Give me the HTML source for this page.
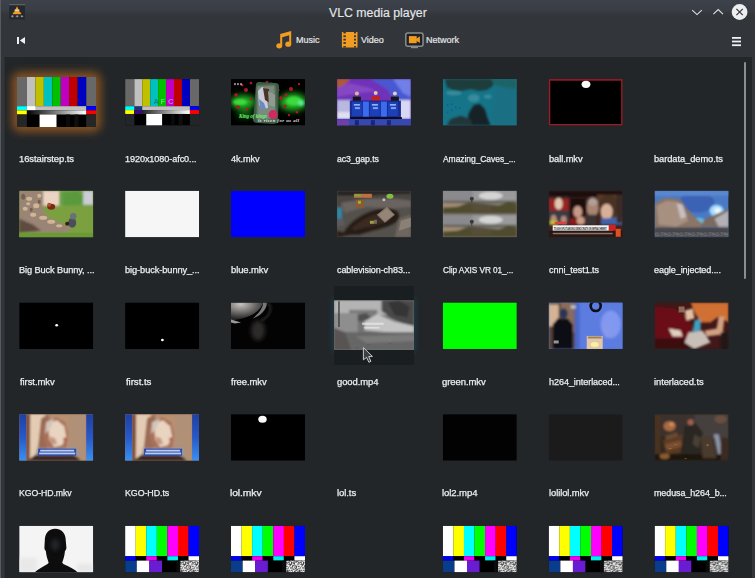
<!DOCTYPE html>
<html><head><meta charset="utf-8">
<style>
*{margin:0;padding:0;box-sizing:border-box}
html,body{width:755px;height:578px;overflow:hidden;background:#32363a;font-family:"Liberation Sans",sans-serif}
#win{position:absolute;left:0;top:0;width:755px;height:578px;background:#32363a}
#title{position:absolute;left:0;top:0;width:755px;height:20px;background:linear-gradient(#3d414a 0px,#3a3e46 9px,#373b42 11.5px,#33373c 14px,#32363a 20px)}
#lb{position:absolute;left:0;top:0;width:1px;height:578px;background:#575b5f}
#content{position:absolute;left:4px;top:57px;width:748px;height:521px;background:#232629;border-left:1px solid #2b2f32}
.l{position:absolute;transform-origin:0 0;font-size:9px;color:#eceeef;white-space:nowrap;line-height:10px;-webkit-text-stroke:0.25px #eceeef;letter-spacing:-0.08px}
.ttl{position:absolute;left:329px;top:6px;font-size:12.3px;line-height:15px;color:#e4e6e8;white-space:nowrap;-webkit-text-stroke:0.15px #e4e6e8}
.tb{position:absolute;font-size:9px;line-height:10px;color:#e4e6e8;white-space:nowrap;-webkit-text-stroke:0.2px #e4e6e8}
#sb{position:absolute;left:744px;top:62px;width:2px;height:217px;background:#8a8e91;border-radius:1px}
</style></head><body>
<div id="win">
<div id="title"></div>
<div id="lb"></div>
<div class="ttl">VLC media player</div>
<div class="tb" style="left:296px;top:35px">Music</div>
<div class="tb" style="left:361px;top:35px">Video</div>
<div class="tb" style="left:426px;top:35px">Network</div>

<svg width="755" height="57" style="position:absolute;left:0;top:0">
<!-- vlc app icon -->
<rect x="9.2" y="4" width="15.8" height="15.5" fill="#25282c"/>
<rect x="9.2" y="4" width="15.8" height="1.3" fill="#5e6164"/>
<path d="M17,6.3 L20.6,13.8 L13.4,13.8 Z" fill="#f0a030"/>
<rect x="14.6" y="9.6" width="4.8" height="1.3" fill="#e0d8c8"/>
<rect x="12.8" y="12.6" width="8.4" height="1.6" fill="#f59a20"/>
<g fill="#9a9da0" stroke="#1a1c1e" stroke-width="0.6"><circle cx="12.4" cy="16.3" r="1.4"/><circle cx="17.2" cy="16.3" r="1.4"/><circle cx="21.9" cy="16.3" r="1.4"/></g>
<!-- back -->
<rect x="17" y="37" width="2" height="7" fill="#eef0f1"/>
<path d="M25,37 L25,44 L19.8,40.5 Z" fill="#eef0f1"/>
<!-- music note -->
<g fill="#f39c22">
<path d="M280.2,34 L291.2,31 L291.2,44.8 L289.2,44.8 L289.2,35.2 L282.2,37.2 L282.2,46.5 L280.2,46.5 Z"/>
<ellipse cx="279.2" cy="45.8" rx="2.9" ry="2.6"/>
<ellipse cx="288.2" cy="44.2" rx="2.9" ry="2.6"/>
</g>
<!-- film strip -->
<rect x="341.9" y="32" width="15.6" height="15.5" fill="#f39c22"/>
<g fill="#32363a">
<rect x="343.4" y="32" width="2.5" height="1.4"/><rect x="354" y="32" width="2" height="1.4"/>
<rect x="343.4" y="46.1" width="2.5" height="1.4"/><rect x="354" y="46.1" width="2" height="1.4"/>
<rect x="343.4" y="35.3" width="2.4" height="1.8"/><rect x="343.4" y="38.7" width="2.4" height="1.8"/><rect x="343.4" y="42.1" width="2.4" height="1.8"/>
<rect x="354" y="35.3" width="1.9" height="1.8"/><rect x="354" y="38.7" width="1.9" height="1.8"/><rect x="354" y="42.1" width="1.9" height="1.8"/>
</g>
<!-- network tv -->
<rect x="405.8" y="33" width="17.2" height="13.2" rx="2" fill="#1e2226" stroke="#8a8d90" stroke-width="1.5"/>
<rect x="411" y="46.8" width="7" height="1.4" fill="#8a8d90"/>
<rect x="408.9" y="36.1" width="7.8" height="7.1" fill="#f39c22"/>
<path d="M416,39 L419.9,36.2 L419.9,43 L416,40.4 Z" fill="#f39c22"/>
<!-- window controls -->
<path d="M692.2,10.2 L697,14.6 L701.8,10.2" fill="none" stroke="#dfe1e3" stroke-width="1.1"/>
<path d="M713.4,14.2 L718.2,9.6 L723,14.2" fill="none" stroke="#dfe1e3" stroke-width="1.1"/>
<circle cx="739.6" cy="12" r="7.9" fill="#eceeef"/>
<path d="M736.4,8.8 L742.8,15.2 M742.8,8.8 L736.4,15.2" stroke="#32363a" stroke-width="1.2"/>
<!-- hamburger -->
<g fill="#eef0f1"><rect x="732" y="37" width="9" height="1.8"/><rect x="732" y="40.6" width="9" height="1.8"/><rect x="732" y="44.3" width="9" height="1.8"/></g>
</svg>
<div id="content"></div>
<div id="sb"></div>
</div>
<svg id="thumbs" width="755" height="578" viewBox="0 0 755 578" style="position:absolute;left:0;top:0">
<defs><pattern id="noise" width="12" height="12" patternUnits="userSpaceOnUse"><rect width="12" height="12" fill="#8a8a8a"/><rect x="0" y="0" width="1" height="1" fill="#4a4a4a"/><rect x="6" y="0" width="1" height="1" fill="#eeeeee"/><rect x="7" y="0" width="1" height="1" fill="#4a4a4a"/><rect x="9" y="0" width="1" height="1" fill="#4a4a4a"/><rect x="11" y="0" width="1" height="1" fill="#eeeeee"/><rect x="0" y="1" width="1" height="1" fill="#4a4a4a"/><rect x="1" y="1" width="1" height="1" fill="#c4c4c4"/><rect x="2" y="1" width="1" height="1" fill="#4a4a4a"/><rect x="3" y="1" width="1" height="1" fill="#4a4a4a"/><rect x="4" y="1" width="1" height="1" fill="#eeeeee"/><rect x="5" y="1" width="1" height="1" fill="#eeeeee"/><rect x="6" y="1" width="1" height="1" fill="#c4c4c4"/><rect x="9" y="1" width="1" height="1" fill="#eeeeee"/><rect x="11" y="1" width="1" height="1" fill="#eeeeee"/><rect x="0" y="2" width="1" height="1" fill="#4a4a4a"/><rect x="1" y="2" width="1" height="1" fill="#eeeeee"/><rect x="2" y="2" width="1" height="1" fill="#eeeeee"/><rect x="4" y="2" width="1" height="1" fill="#eeeeee"/><rect x="5" y="2" width="1" height="1" fill="#eeeeee"/><rect x="8" y="2" width="1" height="1" fill="#c4c4c4"/><rect x="10" y="2" width="1" height="1" fill="#4a4a4a"/><rect x="11" y="2" width="1" height="1" fill="#4a4a4a"/><rect x="0" y="3" width="1" height="1" fill="#eeeeee"/><rect x="2" y="3" width="1" height="1" fill="#4a4a4a"/><rect x="5" y="3" width="1" height="1" fill="#c4c4c4"/><rect x="6" y="3" width="1" height="1" fill="#c4c4c4"/><rect x="7" y="3" width="1" height="1" fill="#eeeeee"/><rect x="8" y="3" width="1" height="1" fill="#eeeeee"/><rect x="9" y="3" width="1" height="1" fill="#eeeeee"/><rect x="10" y="3" width="1" height="1" fill="#c4c4c4"/><rect x="11" y="3" width="1" height="1" fill="#4a4a4a"/><rect x="0" y="4" width="1" height="1" fill="#eeeeee"/><rect x="1" y="4" width="1" height="1" fill="#4a4a4a"/><rect x="2" y="4" width="1" height="1" fill="#c4c4c4"/><rect x="3" y="4" width="1" height="1" fill="#c4c4c4"/><rect x="5" y="4" width="1" height="1" fill="#4a4a4a"/><rect x="6" y="4" width="1" height="1" fill="#c4c4c4"/><rect x="7" y="4" width="1" height="1" fill="#4a4a4a"/><rect x="9" y="4" width="1" height="1" fill="#eeeeee"/><rect x="11" y="4" width="1" height="1" fill="#eeeeee"/><rect x="2" y="5" width="1" height="1" fill="#eeeeee"/><rect x="4" y="5" width="1" height="1" fill="#c4c4c4"/><rect x="5" y="5" width="1" height="1" fill="#4a4a4a"/><rect x="6" y="5" width="1" height="1" fill="#eeeeee"/><rect x="7" y="5" width="1" height="1" fill="#eeeeee"/><rect x="8" y="5" width="1" height="1" fill="#eeeeee"/><rect x="10" y="5" width="1" height="1" fill="#eeeeee"/><rect x="2" y="6" width="1" height="1" fill="#c4c4c4"/><rect x="3" y="6" width="1" height="1" fill="#c4c4c4"/><rect x="4" y="6" width="1" height="1" fill="#4a4a4a"/><rect x="6" y="6" width="1" height="1" fill="#eeeeee"/><rect x="10" y="6" width="1" height="1" fill="#eeeeee"/><rect x="0" y="7" width="1" height="1" fill="#eeeeee"/><rect x="1" y="7" width="1" height="1" fill="#c4c4c4"/><rect x="2" y="7" width="1" height="1" fill="#4a4a4a"/><rect x="4" y="7" width="1" height="1" fill="#c4c4c4"/><rect x="6" y="7" width="1" height="1" fill="#4a4a4a"/><rect x="7" y="7" width="1" height="1" fill="#c4c4c4"/><rect x="8" y="7" width="1" height="1" fill="#c4c4c4"/><rect x="9" y="7" width="1" height="1" fill="#eeeeee"/><rect x="10" y="7" width="1" height="1" fill="#eeeeee"/><rect x="11" y="7" width="1" height="1" fill="#eeeeee"/><rect x="0" y="8" width="1" height="1" fill="#4a4a4a"/><rect x="2" y="8" width="1" height="1" fill="#eeeeee"/><rect x="3" y="8" width="1" height="1" fill="#eeeeee"/><rect x="5" y="8" width="1" height="1" fill="#4a4a4a"/><rect x="6" y="8" width="1" height="1" fill="#c4c4c4"/><rect x="7" y="8" width="1" height="1" fill="#c4c4c4"/><rect x="8" y="8" width="1" height="1" fill="#4a4a4a"/><rect x="10" y="8" width="1" height="1" fill="#4a4a4a"/><rect x="11" y="8" width="1" height="1" fill="#c4c4c4"/><rect x="0" y="9" width="1" height="1" fill="#eeeeee"/><rect x="2" y="9" width="1" height="1" fill="#eeeeee"/><rect x="3" y="9" width="1" height="1" fill="#4a4a4a"/><rect x="5" y="9" width="1" height="1" fill="#eeeeee"/><rect x="8" y="9" width="1" height="1" fill="#4a4a4a"/><rect x="10" y="9" width="1" height="1" fill="#eeeeee"/><rect x="11" y="9" width="1" height="1" fill="#c4c4c4"/><rect x="0" y="10" width="1" height="1" fill="#eeeeee"/><rect x="2" y="10" width="1" height="1" fill="#c4c4c4"/><rect x="3" y="10" width="1" height="1" fill="#4a4a4a"/><rect x="7" y="10" width="1" height="1" fill="#4a4a4a"/><rect x="8" y="10" width="1" height="1" fill="#4a4a4a"/><rect x="10" y="10" width="1" height="1" fill="#4a4a4a"/><rect x="11" y="10" width="1" height="1" fill="#c4c4c4"/><rect x="0" y="11" width="1" height="1" fill="#c4c4c4"/><rect x="1" y="11" width="1" height="1" fill="#eeeeee"/><rect x="2" y="11" width="1" height="1" fill="#c4c4c4"/><rect x="5" y="11" width="1" height="1" fill="#4a4a4a"/><rect x="6" y="11" width="1" height="1" fill="#4a4a4a"/><rect x="7" y="11" width="1" height="1" fill="#c4c4c4"/><rect x="8" y="11" width="1" height="1" fill="#eeeeee"/><rect x="9" y="11" width="1" height="1" fill="#c4c4c4"/></pattern></defs>
<defs>
<filter id="b05" x="-20%" y="-20%" width="140%" height="140%"><feGaussianBlur stdDeviation="0.5"/></filter>
<filter id="b1" x="-30%" y="-30%" width="160%" height="160%"><feGaussianBlur stdDeviation="1"/></filter>
<filter id="b2" x="-50%" y="-50%" width="200%" height="200%"><feGaussianBlur stdDeviation="2"/></filter>
<filter id="b3" x="-50%" y="-50%" width="200%" height="200%"><feGaussianBlur stdDeviation="3"/></filter>
</defs>

<clipPath id="tc"><rect width="74" height="46.5"/></clipPath>
<filter id="gl" x="-50%" y="-50%" width="200%" height="200%"><feGaussianBlur stdDeviation="4.2"/></filter>
<rect x="12" y="72" width="89" height="60" rx="8" fill="#8e5620" opacity="0.9" filter="url(#gl)"/>

<g transform="translate(17,77) scale(1.0676,1.0753)" clip-path="url(#tc)"><rect width="74" height="46.5" fill="#000"/><rect x="0" y="0" width="9.25" height="27.125" fill="#686868"/><rect x="64.75" y="0" width="9.25" height="27.125" fill="#686868"/><rect x="9.250" y="0" width="7.979" height="27.125" fill="#c0c0c0"/><rect x="17.179" y="0" width="7.979" height="27.125" fill="#c0c000"/><rect x="25.107" y="0" width="7.979" height="27.125" fill="#00c0c0"/><rect x="33.036" y="0" width="7.979" height="27.125" fill="#00c000"/><rect x="40.964" y="0" width="7.979" height="27.125" fill="#c000c0"/><rect x="48.893" y="0" width="7.979" height="27.125" fill="#c00000"/><rect x="56.821" y="0" width="7.979" height="27.125" fill="#0000c0"/><rect x="0" y="27.125" width="9.25" height="3.875" fill="#00ffff"/><rect x="64.75" y="27.125" width="9.25" height="3.875" fill="#0000ff"/><rect x="9.25" y="27.125" width="55.5" height="3.875" fill="#c0c0c0"/><rect x="9.25" y="27.125" width="7.928571428571429" height="3.875" fill="#ffffff"/><rect x="0" y="31.0" width="9.25" height="3.875" fill="#ffff00"/><rect x="64.75" y="31.0" width="9.25" height="3.875" fill="#ff0000"/><linearGradient id="ramp1" x1="0" x2="1"><stop offset="0" stop-color="#000"/><stop offset="1" stop-color="#fff"/></linearGradient><rect x="9.25" y="31.0" width="55.5" height="3.875" fill="url(#ramp1)"/><rect x="0" y="34.875" width="9.25" height="12.625" fill="#262626"/><rect x="64.75" y="34.875" width="9.25" height="12.625" fill="#262626"/><rect x="21.143" y="34.875" width="15.857" height="11.625" fill="#ffffff"/><rect x="45.721" y="34.875" width="3.964" height="11.625" fill="#0a0a0a"/><rect x="53.650" y="34.875" width="3.964" height="11.625" fill="#0e0e0e"/></g>
<g transform="translate(125.10,79.10)" clip-path="url(#tc)"><rect width="74" height="46.5" fill="#000"/><rect x="0" y="0" width="9.25" height="27.125" fill="#686868"/><rect x="64.75" y="0" width="9.25" height="27.125" fill="#686868"/><rect x="9.250" y="0" width="7.979" height="27.125" fill="#c0c0c0"/><rect x="17.179" y="0" width="7.979" height="27.125" fill="#c0c000"/><rect x="25.107" y="0" width="7.979" height="27.125" fill="#00c0c0"/><rect x="33.036" y="0" width="7.979" height="27.125" fill="#00c000"/><rect x="40.964" y="0" width="7.979" height="27.125" fill="#c000c0"/><rect x="48.893" y="0" width="7.979" height="27.125" fill="#c00000"/><rect x="56.821" y="0" width="7.979" height="27.125" fill="#0000c0"/><rect x="0" y="27.125" width="9.25" height="3.875" fill="#00ffff"/><rect x="64.75" y="27.125" width="9.25" height="3.875" fill="#0000ff"/><rect x="9.25" y="27.125" width="55.5" height="3.875" fill="#c0c0c0"/><rect x="9.25" y="27.125" width="7.928571428571429" height="3.875" fill="#1c3572"/><rect x="0" y="31.0" width="9.25" height="3.875" fill="#ffff00"/><rect x="64.75" y="31.0" width="9.25" height="3.875" fill="#ff0000"/><linearGradient id="ramp2" x1="0" x2="1"><stop offset="0" stop-color="#000"/><stop offset="1" stop-color="#fff"/></linearGradient><rect x="9.25" y="31.0" width="55.5" height="3.875" fill="url(#ramp2)"/><rect x="9.25" y="31.0" width="7.928571428571429" height="3.875" fill="#3a0a78"/><rect x="0" y="34.875" width="9.25" height="12.625" fill="#232629"/><rect x="64.75" y="34.875" width="9.25" height="12.625" fill="#232629"/><rect x="21.143" y="34.875" width="15.857" height="11.625" fill="#ffffff"/><rect x="45.721" y="34.875" width="3.964" height="11.625" fill="#0a0a0a"/><rect x="53.650" y="34.875" width="3.964" height="11.625" fill="#0e0e0e"/><text x="28.5" y="24.5" font-family="Liberation Sans" font-weight="bold" font-size="7.5" fill="#207878" opacity="0.85" textLength="8">A</text><text x="35.5" y="24.5" font-family="Liberation Sans" font-weight="bold" font-size="7.5" fill="#a0f0a0" opacity="0.6" textLength="7">F</text><text x="43" y="24.5" font-family="Liberation Sans" font-weight="bold" font-size="7.5" fill="#b0a0f0" opacity="0.8" textLength="7">C</text></g>
<g transform="translate(231.00,79.10)" clip-path="url(#tc)"><rect width="74" height="46.5" fill="#000"/>
<g filter="url(#b3)">
<ellipse cx="12" cy="23" rx="13" ry="7" fill="#20b020"/>
<ellipse cx="62" cy="23" rx="14" ry="9" fill="#20b020"/>
<ellipse cx="14" cy="35" rx="8" ry="4" fill="#106010"/>
</g>
<g filter="url(#b1)" opacity="0.9">
<ellipse cx="9" cy="23" rx="7" ry="3" fill="#40e040"/>
<ellipse cx="63" cy="22" rx="8" ry="4.5" fill="#40e040"/>
<ellipse cx="70" cy="24" rx="3" ry="3" fill="#60f0a0"/>
</g>
<g fill="#b01828" filter="url(#b05)">
<circle cx="15" cy="11" r="2"/><circle cx="5" cy="16" r="1.8"/><circle cx="11" cy="6" r="1.4"/><circle cx="60" cy="10" r="2"/><circle cx="55" cy="16" r="1.6"/><circle cx="50" cy="19" r="1.8"/><circle cx="47" cy="11" r="1.6"/><circle cx="7" cy="28" r="1.8"/><circle cx="16" cy="30" r="1.4"/><circle cx="40" cy="5" r="1.6"/><circle cx="54" cy="27" r="1.7"/><circle cx="36" cy="3" r="1.4"/><circle cx="45" cy="28" r="1.8"/><circle cx="20" cy="20" r="1.2"/><circle cx="66" cy="33" r="1.4"/><circle cx="58" cy="36" r="1.2"/><circle cx="20" cy="4" r="1.4"/><circle cx="68" cy="5" r="1.2"/>
</g>
<path d="M25,6 C25,3 27,3 29,3 L45,4 C47,4 48,5 48,8 L47,42 C47,44 45,45 42,45 L26,44 C24,44 22,43 22,41 Z" fill="#3a5a40" filter="url(#b05)"/>
<path d="M26,7 L44,6 L45,40 L26,41 Z" fill="#7a8a7e" filter="url(#b1)"/>
<g filter="url(#b05)">
<path d="M27,12 L31,8 L35,10 L37,29 L31,30 L28,26 Z" fill="#c8ccd8"/>
<path d="M32,9 L38,10 L39,24 L34,21 Z" fill="#4a3028"/>
<path d="M28,20 L33,24 L35,30 L29,30 Z" fill="#7088c0"/>
<path d="M37,12 L44,16 L44,28 L38,26 Z" fill="#909a90"/>
</g>
<circle cx="42" cy="35.5" r="4.5" fill="#d02a60" filter="url(#b05)"/>
<text x="8" y="38.6" font-family="Liberation Serif" font-style="italic" font-weight="bold" font-size="5.2" fill="#70f070" textLength="28">King of kings</text>
<text x="27" y="43.2" font-family="Liberation Serif" font-style="italic" font-weight="bold" font-size="4.6" fill="#e8ecf0" textLength="41">is risen for us all</text>
<g fill="#c0c0c0" opacity="0.7"><rect x="3" y="4" width="2" height="2"/><rect x="6" y="4" width="2" height="2"/><rect x="9" y="4" width="2" height="2"/></g>
</g>
<g transform="translate(336.90,79.10)" clip-path="url(#tc)"><rect width="74" height="46.5" fill="#6028a8"/>
<g filter="url(#b1)">
<path d="M0,0 L74,0 L74,22 L0,22 Z" fill="#7030b8"/>
<path d="M34,0 L74,0 L74,24 L58,22 L50,10 Z" fill="#4858d0"/>
<path d="M56,0 L74,0 L74,18 L66,14 Z" fill="#7080e8"/>
<path d="M0,0 L14,0 L6,7 L0,9 Z" fill="#b05a30"/>
<path d="M0,9 L12,4 L30,8 L40,12 L24,14 L0,18 Z" fill="#9050c8" opacity="0.7"/>
<rect x="0" y="21" width="14" height="19" fill="#b8b8e0"/>
<rect x="60" y="21" width="14" height="19" fill="#d8d8f4"/>
<rect x="0" y="33" width="14" height="7" fill="#e0e0f0"/>
</g>
<g filter="url(#b05)">
<rect x="16" y="17.5" width="8" height="6" fill="#181818"/>
<circle cx="20" cy="14.5" r="2" fill="#d8b898"/>
<rect x="34.5" y="17" width="8.5" height="6.5" fill="#c02028"/>
<circle cx="38.8" cy="14" r="2" fill="#e8c8a8"/>
<rect x="54" y="17.5" width="8" height="6" fill="#181818"/>
<circle cx="58" cy="14.5" r="2" fill="#e0d0c0"/>
</g>
<rect x="13" y="21.5" width="51" height="17" fill="#1a2c90"/>
<g filter="url(#b05)">
<rect x="15" y="23" width="10" height="14" fill="#1c40b8"/>
<rect x="26" y="22.5" width="6" height="15" fill="#3a6cf0"/>
<rect x="33" y="23" width="10" height="14" fill="#1c40b8"/>
<rect x="44" y="22.5" width="6" height="15" fill="#3a6cf0"/>
<rect x="51" y="23" width="10" height="14" fill="#1c40b8"/>
<rect x="17" y="25" width="6" height="1.5" fill="#a0c0ff"/><rect x="35" y="25" width="6" height="1.5" fill="#a0c0ff"/><rect x="53" y="25" width="6" height="1.5" fill="#a0c0ff"/>
<rect x="18" y="28" width="5" height="2" fill="#80a0f0"/><rect x="36" y="28" width="5" height="2" fill="#80a0f0"/><rect x="54" y="28" width="5" height="2" fill="#80a0f0"/>
</g>
<rect x="13" y="38" width="52" height="2.2" fill="#0c0c18"/>
<rect x="0" y="40" width="74" height="6.5" fill="#3448b0" filter="url(#b05)"/>
<rect x="0" y="41" width="12" height="5.5" fill="#7040a8"/>
<g fill="#0a1a60" opacity="0.7"><rect x="18" y="41" width="4" height="5.5"/><rect x="34" y="41" width="4" height="5.5"/><rect x="50" y="41" width="4" height="5.5"/></g>
</g>
<g transform="translate(442.80,79.10)" clip-path="url(#tc)"><rect width="74" height="46.5" fill="#167488"/>
<g filter="url(#b1)">
<path d="M2,0 L52,0 L50,7 L44,11 L36,12 L28,10 L18,12 L10,11 L4,8 Z" fill="#1f3c3a"/>
<path d="M48,0 L74,0 L74,10 L62,9 L52,6 Z" fill="#1f6468"/>
<path d="M24,46.5 L26,34 L31,26 L37,25 L42,30 L45,40 L48,46.5 Z" fill="#182026"/>
<path d="M4,46.5 L8,40 L18,37 L28,40 L30,46.5 Z" fill="#243438"/>
<path d="M52,6 L74,10 L74,46.5 L48,46.5 L50,30 Z" fill="#1a6c80" opacity="0.6"/>
</g>
<g fill="#60a8b8" opacity="0.45" filter="url(#b1)"><ellipse cx="11" cy="14" rx="8" ry="2.5"/><ellipse cx="31" cy="19" rx="6" ry="4"/><ellipse cx="45" cy="17.5" rx="4" ry="2"/></g>
<g fill="#1030c0"><circle cx="5" cy="26" r="0.6"/><circle cx="9" cy="25" r="0.6"/><circle cx="13" cy="28" r="0.6"/><circle cx="9" cy="31" r="0.6"/><circle cx="5" cy="33" r="0.6"/><circle cx="17" cy="29" r="0.6"/></g>
</g>
<g transform="translate(548.70,79.10)" clip-path="url(#tc)"><rect width="74" height="46.5" fill="#9a1a26"/><rect x="1.6" y="1.6" width="70.8" height="43.3" fill="#000"/><ellipse cx="37.3" cy="5.2" rx="4.4" ry="3.6" fill="#fafafa"/></g>
<g transform="translate(19.20,190.78)" clip-path="url(#tc)"><rect width="74" height="46.5" fill="#7a9c3c"/>
<g filter="url(#b1)">
<rect x="20" y="0" width="24" height="15" fill="#ecd4c4"/>
<rect x="40" y="0" width="34" height="15" fill="#6aa046"/>
<rect x="64" y="0" width="10" height="14" fill="#ccccd4"/>
<path d="M44,2 L58,0 L64,6 L62,14 L44,15 Z" fill="#5a9a3e"/>
<rect x="0" y="15" width="74" height="32" fill="#7aa040"/>
<path d="M0,0 L24,0 L24,20 L30,27 L46,34 L54,38 L44,42 L10,42 L0,40 Z" fill="#9a8474"/>
<path d="M0,28 L14,34 L22,40 L0,42 Z" fill="#5e4c40"/>
</g>
<g fill="#d8bc98" filter="url(#b05)" opacity="0.9">
<ellipse cx="10" cy="8" rx="3" ry="2"/><ellipse cx="17" cy="15" rx="3" ry="2.5"/><ellipse cx="6" cy="18" rx="2.5" ry="2"/><ellipse cx="14" cy="24" rx="3" ry="2"/><ellipse cx="20" cy="5" rx="2" ry="2"/><ellipse cx="24" cy="27" rx="4" ry="2"/><ellipse cx="32" cy="31" rx="4" ry="2"/><ellipse cx="40" cy="35" rx="3" ry="1.5"/><ellipse cx="9" cy="13" rx="2" ry="1.5"/>
</g>
<g fill="#5a4a3a" filter="url(#b05)" opacity="0.6"><ellipse cx="4" cy="6" rx="2" ry="3"/><ellipse cx="12" cy="19" rx="1.5" ry="2"/><ellipse cx="20" cy="11" rx="1.5" ry="2"/></g>
<g filter="url(#b05)">
<ellipse cx="32" cy="16" rx="4" ry="3" fill="#7a2a18"/>
<ellipse cx="30" cy="14" rx="2" ry="2" fill="#b05030"/>
<ellipse cx="53" cy="32" rx="4" ry="5" fill="#4a5058"/>
<circle cx="54" cy="25.5" r="3.2" fill="#6a7078"/>
<ellipse cx="48" cy="33" rx="2" ry="2" fill="#3a1a10"/>
</g>
<rect x="0" y="42" width="74" height="4.5" fill="#6a9a36" filter="url(#b05)"/>
</g>
<g transform="translate(125.10,190.78)" clip-path="url(#tc)"><rect width="74" height="46.5" fill="#f6f6f6"/></g>
<g transform="translate(231.00,190.78)" clip-path="url(#tc)"><rect width="74" height="46.5" fill="#0000fe"/></g>
<g transform="translate(336.90,190.78)" clip-path="url(#tc)"><rect width="74" height="46.5" fill="#54504c"/>
<g filter="url(#b1)">
<rect x="0" y="0" width="74" height="5" fill="#262422"/>
<path d="M0,6 L18,6 L40,4 L74,3 L74,12 L50,14 L30,12 L0,16 Z" fill="#4a4440"/>
<path d="M4,12 L30,8 L60,8 L74,10 L74,16 L52,18 L30,16 L8,22 Z" fill="#6a6460"/>
<path d="M6,44 C10,34 24,22 44,18 C56,16 64,20 62,28 C58,36 40,38 22,44 Z" fill="#261a14"/>
<path d="M14,38 C22,30 34,24 46,22 C54,22 56,26 52,30 C44,34 30,36 18,40 Z" fill="#3a2a22"/>
<rect x="0" y="17" width="5" height="11" fill="#2a8aa8"/>
<path d="M0,28 L6,28 L8,34 L0,36 Z" fill="#5a5a60"/>
<path d="M62,28 L74,24 L74,46.5 L58,46.5 Z" fill="#6e665e"/>
<path d="M0,40 L14,44 L0,46.5 Z" fill="#2a1e18"/>
</g>
<g filter="url(#b05)">
<path d="M40,24 L50,16 L58,24 L48,32 Z" fill="#8a7a6e"/>
<path d="M42,24 L50,18 L56,24 L48,30 Z" fill="#9a8a7a" opacity="0.7"/>
<path d="M64,30 L74,27 L74,36 L62,40 Z" fill="#8a8076"/>
<rect x="17" y="3" width="18" height="4" fill="#c07040"/>
<rect x="18" y="3.5" width="6" height="2" fill="#70b040"/>
<ellipse cx="53" cy="5.5" rx="3.5" ry="2.5" fill="#80c040"/>
<rect x="19" y="9" width="8" height="8" fill="#8a5a30"/>
<rect x="21" y="10" width="3" height="3" fill="#a0b040"/>
<rect x="33" y="30" width="4" height="3" fill="#a0a040"/>
<rect x="37" y="29" width="3" height="4" fill="#706a60"/>
<circle cx="47" cy="9" r="1.5" fill="#c0c0c0"/>
</g>
</g>
<g transform="translate(442.80,190.78)" clip-path="url(#tc)"><rect width="74" height="46.5" fill="#80807a"/>
<g filter="url(#b1)">
<rect x="0" y="0" width="74" height="11" fill="#9a9a9c"/>
<rect x="0" y="0" width="30" height="10" fill="#8a8a8e"/>
<ellipse cx="48" cy="5" rx="12" ry="4" fill="#d4d4d4"/>
<rect x="0" y="10" width="74" height="2" fill="#5e5850"/>
<path d="M0,12 L22,13 L12,17 L0,17 Z" fill="#a08a72"/>
<path d="M0,17 L15,16 L26,12 L40,13 L56,15 L66,11 L74,13 L74,22.5 L0,22.5 Z" fill="#504c2e"/>
<path d="M28,14 L50,14 L48,20 L30,20 Z" fill="#5a5040" opacity="0.7"/>
<rect x="0" y="22.5" width="74" height="1.5" fill="#6a5a48"/>
<rect x="0" y="24" width="74" height="10.5" fill="#9a9a9c"/>
<rect x="0" y="24" width="30" height="10" fill="#8a8a8e"/>
<ellipse cx="48" cy="29" rx="12" ry="4" fill="#d4d4d4"/>
<rect x="0" y="34" width="74" height="2" fill="#5e5850"/>
<path d="M0,36 L22,37 L12,41 L0,41 Z" fill="#a08a72"/>
<path d="M0,41 L15,40 L26,36 L40,37 L56,39 L66,35 L74,37 L74,46.5 L0,46.5 Z" fill="#504c2e"/>
<path d="M28,38 L50,38 L48,44 L30,44 Z" fill="#5a5040" opacity="0.7"/>
</g>
<g fill="#3a3a36" filter="url(#b05)"><ellipse cx="29" cy="8" rx="2" ry="2"/><rect x="28.5" y="8" width="1" height="4"/><ellipse cx="29" cy="31" rx="2" ry="2"/><rect x="28.5" y="31" width="1" height="4"/></g>
</g>
<g transform="translate(548.70,190.78)" clip-path="url(#tc)"><rect width="74" height="46.5" fill="#3a2220"/>
<g filter="url(#b1)">
<rect x="0" y="0" width="74" height="6" fill="#1a1010"/>
<rect x="0" y="6" width="20" height="28" fill="#3a2a2a"/>
<rect x="0" y="8" width="20" height="12" fill="#9a2020"/>
<rect x="0" y="20" width="20" height="14" fill="#3a3a44"/>
<ellipse cx="10" cy="13" rx="4" ry="6" fill="#e0c8b0"/>
<ellipse cx="5" cy="29" rx="3" ry="5" fill="#b89070"/>
<rect x="1" y="30" width="8" height="4" fill="#c0c030"/>
<ellipse cx="15" cy="29" rx="3" ry="4" fill="#b08878"/>
<rect x="21" y="6" width="17" height="28" fill="#2a1814"/>
<path d="M22,8 L36,8 L36,20 L22,20 Z" fill="#201010"/>
<ellipse cx="29" cy="17" rx="7" ry="9" fill="#1a0c0a"/><ellipse cx="29" cy="21" rx="4.5" ry="6" fill="#c89888"/>
<path d="M21,28 L38,26 L38,34 L21,34 Z" fill="#8a1a1a"/>
<ellipse cx="44" cy="17" rx="6" ry="10" fill="#a88472"/><ellipse cx="44" cy="11" rx="5" ry="4" fill="#b0a098"/>
<path d="M36,24 L48,24 L48,34 L36,34 Z" fill="#3a3030"/>
<path d="M48,4 L68,4 L72,18 L68,32 L52,32 L50,14 Z" fill="#5a3a28"/>
<ellipse cx="60" cy="16" rx="10" ry="12" fill="#4a3020"/><ellipse cx="58" cy="21" rx="6" ry="8" fill="#d8b09a"/>
<path d="M52,28 L74,26 L74,34 L52,34 Z" fill="#4064a8"/>
<ellipse cx="32" cy="30" rx="4" ry="4" fill="#c8a088"/>
<rect x="68" y="4" width="6" height="28" fill="#3a2a28"/>
</g>
<rect x="4" y="34.5" width="60" height="5.5" fill="#f4f4f4"/>
<text x="5" y="39" font-family="Liberation Sans" font-weight="bold" font-size="3.6" fill="#181818" textLength="53" lengthAdjust="spacingAndGlyphs">TOUGH SPLIT AMONG DEMOCRATS ON IMPEACHMENT</text>
<rect x="60" y="34" width="7" height="6" fill="#d02020"/>
<rect x="0" y="40" width="74" height="6.5" fill="#2a1612"/>
<g fill="#b0a090" opacity="0.7"><rect x="4" y="42" width="60" height="1.5"/></g>
<rect x="67" y="38" width="5" height="8" fill="#e05020" filter="url(#b05)"/>
<rect x="6" y="31" width="12" height="2.5" fill="#e04040" filter="url(#b05)"/>
</g>
<g transform="translate(654.60,190.78)" clip-path="url(#tc)"><rect width="74" height="46.5" fill="#4a7ac4"/>
<g filter="url(#b1)">
<ellipse cx="42" cy="12" rx="18" ry="10" fill="#3a62b4"/>
<rect x="0" y="0" width="74" height="5" fill="#5a88d0"/>
<ellipse cx="62" cy="20" rx="7" ry="6" fill="#a8dcff"/>
<ellipse cx="63" cy="20" rx="3" ry="3" fill="#f0f8ff"/>
<ellipse cx="44" cy="30" rx="6" ry="3" fill="#60c0e0"/>
<path d="M0,14 L5,9 L14,7 L26,9 L32,18 L40,26 L48,33 L46,37 L0,37 Z" fill="#8a7466"/>
<path d="M2,15 L12,10 L22,11 L28,20 L34,30 L22,36 L4,34 Z" fill="#a89080"/>
<path d="M22,12 L28,14 L32,26 L26,28 Z" fill="#c8c0c0"/>
<path d="M46,36 L50,28 L58,25 L74,18 L74,37 Z" fill="#7a6a62"/>
<path d="M60,28 L74,20 L74,36 L64,36 Z" fill="#b4b0b4"/>
<rect x="0" y="37" width="74" height="9.5" fill="#3e3c40"/>
</g>
<rect x="0" y="41.5" width="74" height="4" fill="url(#noise)" opacity="0.3"/><rect x="0" y="38" width="74" height="3" fill="#505058" opacity="0.6" filter="url(#b05)"/>
</g>
<g transform="translate(19.20,302.46)" clip-path="url(#tc)"><rect width="74" height="46.5" fill="#000"/><ellipse cx="37.5" cy="22.8" rx="1.4" ry="1.2" fill="#fff"/></g>
<g transform="translate(125.10,302.46)" clip-path="url(#tc)"><rect width="74" height="46.5" fill="#000"/><ellipse cx="37.3" cy="37.5" rx="1.4" ry="1.3" fill="#fff"/></g>
<g transform="translate(231.00,302.46)" clip-path="url(#tc)"><rect width="74" height="46.5" fill="#030303"/>
<radialGradient id="frg" cx="0.3" cy="0.1" r="0.8"><stop offset="0" stop-color="#c8c4c0"/><stop offset="0.6" stop-color="#6a6866"/><stop offset="1" stop-color="#2a2a2a"/></radialGradient>
<path d="M0,0 L32,0 C30,8 20,16 0,18 Z" fill="url(#frg)" filter="url(#b05)"/>
<path d="M32,0 L36,0 C36,8 28,14 22,16 C28,10 32,6 32,0 Z" fill="#7a7a7a" filter="url(#b05)"/>
<path d="M0,17 L10,20 L4,21 L0,20 Z" fill="#9a9a9a" filter="url(#b05)"/>
<ellipse cx="27" cy="28" rx="7" ry="10" fill="#2e2c2a" filter="url(#b2)"/>
<path d="M36,0 C42,4 40,14 30,18" stroke="#2a2a2a" stroke-width="2" fill="none" filter="url(#b1)"/>
</g>
<filter id="gl2" x="-50%" y="-50%" width="200%" height="200%"><feGaussianBlur stdDeviation="2.5"/></filter>
<rect x="332" y="298" width="84" height="54" fill="#1d4550" opacity="0.6" filter="url(#gl2)"/>
<rect x="334" y="286" width="80" height="79" fill="#191e21"/>

<g transform="translate(334,300.2) scale(1.0811,1.0710)" clip-path="url(#tc)"><rect width="74" height="46.5" fill="#747474"/>
<g filter="url(#b1)">
<rect x="0" y="0" width="74" height="14" fill="#b4b4b4"/>
<path d="M44,0 L74,0 L74,24 L64,22 L52,16 L44,10 Z" fill="#4a4a4a"/>
<path d="M50,2 L60,0 L70,6 L68,16 L56,14 Z" fill="#363636"/>
<rect x="14" y="9" width="26" height="9" fill="#7a7a7a"/>
<path d="M20,14 L30,12 L36,18 L22,20 Z" fill="#505050"/>
<path d="M28,20 L40,13 L56,20 L74,24 L74,32 L28,28 Z" fill="#c4c4c4"/>
<rect x="0" y="12" width="22" height="18" fill="#8e8e8e"/>
<path d="M0,30 L74,30 L74,46.5 L0,46.5 Z" fill="#666"/>
<path d="M0,26 L10,30 L16,46.5 L0,46.5 Z" fill="#5a5252"/>
<path d="M20,34 L74,32 L74,38 L30,40 Z" fill="#7a7a7a"/>
</g>
<rect x="4" y="1" width="1.2" height="24" fill="#3a3636"/>
<g fill="#e8e8e8" opacity="0.75" filter="url(#b05)"><rect x="26" y="21" width="20" height="2"/><rect x="28" y="25" width="14" height="1.5"/></g>
<g fill="#5a5a5a" opacity="0.6"><rect x="10" y="36" width="3" height="1"/><rect x="30" y="41" width="4" height="1"/><rect x="50" y="40" width="3" height="1"/><rect x="20" y="44" width="3" height="1"/></g>
</g>
<g transform="translate(442.80,302.46)" clip-path="url(#tc)"><rect width="74" height="46.5" fill="#00fe00"/></g>
<g transform="translate(548.70,302.46)" clip-path="url(#tc)"><rect width="74" height="46.5" fill="#5a78d8"/>
<g filter="url(#b1)">
<rect x="0" y="0" width="28" height="46.5" fill="#5a4438"/>
<rect x="0" y="2" width="10" height="22" fill="#d4b494"/>
<rect x="12" y="0" width="14" height="30" fill="#8a6c5a"/>
<rect x="26" y="0" width="5" height="46.5" fill="#4868c8"/>
<rect x="31" y="0" width="43" height="46.5" fill="#5c7ce0"/>
<ellipse cx="62" cy="22" rx="10" ry="14" fill="#8098f0"/>
<ellipse cx="58" cy="28" rx="4" ry="8" fill="#9098e8" opacity="0.6"/>
<path d="M4,46.5 L4,22 L9,16 L19,16 L24,22 L24,46.5 Z" fill="#0e0e16"/>
<ellipse cx="15" cy="11" rx="4" ry="5" fill="#283458"/>
<rect x="22" y="3" width="5" height="3" fill="#c0c8d0"/>
</g>
<circle cx="47" cy="3.5" r="5" fill="none" stroke="#0c0c12" stroke-width="2.6" filter="url(#b05)"/>
<rect x="38" y="33.5" width="16" height="13" fill="#e0c8a8" filter="url(#b05)"/>
<rect x="39" y="34" width="14" height="2" fill="#a08060" filter="url(#b05)"/>
<ellipse cx="46" cy="42" rx="4" ry="2.5" fill="#f8f0a0" filter="url(#b05)"/>
<rect x="5" y="38" width="5" height="3" fill="#d0d0d0" opacity="0.7"/>
</g>
<g transform="translate(654.60,302.46)" clip-path="url(#tc)"><rect width="74" height="46.5" fill="#401818"/>
<g filter="url(#b1)">
<path d="M0,4 L20,6 L34,16 L38,28 L26,46.5 L0,46.5 Z" fill="#6a1016"/>
<path d="M36,0 L74,0 L74,20 L64,14 L56,20 L46,20 L40,10 Z" fill="#d07030"/>
<path d="M64,14 L70,14 L68,32 L52,34 L50,28 L62,26 Z" fill="#d0a080"/>
<rect x="0" y="36" width="40" height="10.5" fill="#3a1010"/>
<path d="M14,26 L26,28 L28,34 L18,34 Z" fill="#e0d0c0"/>
<path d="M30,8 L38,6 L40,16 L32,18 Z" fill="#e0c0a0"/>
<path d="M34,30 L48,28 L56,40 L40,46.5 L30,40 Z" fill="#c8c0b8"/>
<path d="M40,18 L46,16 L46,28 L38,30 Z" fill="#40a0c0"/>
<rect x="66" y="30" width="8" height="16.5" fill="#201818"/>
</g>
<rect x="24" y="4" width="6" height="6" fill="#c0a080" opacity="0.6" filter="url(#b05)"/>
</g>
<g transform="translate(19.20,414.14)" clip-path="url(#tc)"><rect width="74" height="46.5" fill="#a88068"/>
<linearGradient id="kgb" x1="0" y1="0" x2="0" y2="1"><stop offset="0" stop-color="#2040a0"/><stop offset="0.5" stop-color="#2858c8"/><stop offset="1" stop-color="#3a90f0"/></linearGradient>
<g filter="url(#b1)">
<rect x="7" y="0" width="60" height="46.5" fill="#b89072"/>
<path d="M7,0 L12,0 L10,46.5 L7,46.5 Z" fill="#7a4a3a"/>
<path d="M11,0 L26,0 L22,18 L17,46.5 L11,46.5 Z" fill="#e4ccb4"/>
<path d="M22,4 L30,0 L28,40 L18,40 Z" fill="#9a6a54"/>
<rect x="50" y="0" width="17" height="46.5" fill="#b09076"/>
<path d="M24,14 L28,6 L37,3 L46,8 L49,20 L47,34 L36,37 L27,32 L24,22 Z" fill="#a87058"/>
<path d="M29,9 L38,6 L45,12 L47,22 L43,31 L35,33 L30,25 Z" fill="#e8d4c0"/>
<path d="M27,8 L35,4 L31,14 L26,20 Z" fill="#d0c4bc"/>
<path d="M30,22 L36,24 L38,30 L32,30 Z" fill="#c89880"/>
<path d="M8,46.5 L20,38 L36,36 L52,38 L62,46.5 Z" fill="#3a2822"/>
<circle cx="45.5" cy="25" r="1.4" fill="#b83838"/>
</g>
<rect x="0" y="0" width="7" height="46.5" fill="url(#kgb)"/>
<rect x="67" y="0" width="7" height="46.5" fill="url(#kgb)"/>
<rect x="17" y="33.5" width="42" height="8.5" fill="#90a0c0" opacity="0.5" filter="url(#b1)"/>
<rect x="19" y="34.5" width="38" height="7" fill="#2848b0" opacity="0.95" filter="url(#b05)"/>
<g fill="#e0ecff" opacity="0.8"><rect x="21" y="35.6" width="34" height="1.8"/><rect x="20" y="38.4" width="36" height="1.8"/></g>
</g>
<g transform="translate(125.10,414.14)" clip-path="url(#tc)"><rect width="74" height="46.5" fill="#a88068"/>
<linearGradient id="kgb" x1="0" y1="0" x2="0" y2="1"><stop offset="0" stop-color="#2040a0"/><stop offset="0.5" stop-color="#2858c8"/><stop offset="1" stop-color="#3a90f0"/></linearGradient>
<g filter="url(#b1)">
<rect x="7" y="0" width="60" height="46.5" fill="#b89072"/>
<path d="M7,0 L12,0 L10,46.5 L7,46.5 Z" fill="#7a4a3a"/>
<path d="M11,0 L26,0 L22,18 L17,46.5 L11,46.5 Z" fill="#e4ccb4"/>
<path d="M22,4 L30,0 L28,40 L18,40 Z" fill="#9a6a54"/>
<rect x="50" y="0" width="17" height="46.5" fill="#b09076"/>
<path d="M24,14 L28,6 L37,3 L46,8 L49,20 L47,34 L36,37 L27,32 L24,22 Z" fill="#a87058"/>
<path d="M29,9 L38,6 L45,12 L47,22 L43,31 L35,33 L30,25 Z" fill="#e8d4c0"/>
<path d="M27,8 L35,4 L31,14 L26,20 Z" fill="#d0c4bc"/>
<path d="M30,22 L36,24 L38,30 L32,30 Z" fill="#c89880"/>
<path d="M8,46.5 L20,38 L36,36 L52,38 L62,46.5 Z" fill="#3a2822"/>
<circle cx="45.5" cy="25" r="1.4" fill="#b83838"/>
</g>
<rect x="0" y="0" width="7" height="46.5" fill="url(#kgb)"/>
<rect x="67" y="0" width="7" height="46.5" fill="url(#kgb)"/>
<rect x="17" y="33.5" width="42" height="8.5" fill="#90a0c0" opacity="0.5" filter="url(#b1)"/>
<rect x="19" y="34.5" width="38" height="7" fill="#2848b0" opacity="0.95" filter="url(#b05)"/>
<g fill="#e0ecff" opacity="0.8"><rect x="21" y="35.6" width="34" height="1.8"/><rect x="20" y="38.4" width="36" height="1.8"/></g>
</g>
<g transform="translate(231.00,414.14)" clip-path="url(#tc)"><rect width="74" height="46.5" fill="#000"/><ellipse cx="31.5" cy="5" rx="4.2" ry="3.5" fill="#fafafa"/></g>
<g transform="translate(442.80,414.14)" clip-path="url(#tc)"><rect width="74" height="46.5" fill="#020202"/></g>
<g transform="translate(548.70,414.14)" clip-path="url(#tc)"><rect width="74" height="46.5" fill="#1b1b1b"/></g>
<g transform="translate(654.60,414.14)" clip-path="url(#tc)"><rect width="74" height="46.5" fill="#32281f"/>
<g filter="url(#b1)">
<rect x="0" y="0" width="74" height="22" fill="#3a332e"/>
<rect x="40" y="0" width="34" height="24" fill="#45403c"/>
<ellipse cx="15" cy="12" rx="6" ry="5" fill="#a86a40"/>
<ellipse cx="17" cy="10" rx="2.5" ry="2" fill="#d09060"/>
<rect x="0" y="0" width="6" height="46.5" fill="#4a3020"/>
<path d="M8,26 L28,20 L34,28 L28,38 L12,40 Z" fill="#5a3a22"/>
<path d="M10,30 L26,26 L28,32 L12,36 Z" fill="#7a5030"/>
<path d="M10,22 L22,18 L24,22 L12,26 Z" fill="#6a4a30"/>
<path d="M30,12 L40,8 L48,18 L46,38 L34,46.5 L26,38 Z" fill="#2a2624"/>
<circle cx="36" cy="8" r="3" fill="#a06050"/>
<path d="M40,20 L46,24 L44,34 L38,30 Z" fill="#4a4036"/>
<path d="M59,20 L64,20 L70,42 L64,44 Z" fill="#8a92a4"/>
<rect x="0" y="40" width="74" height="6.5" fill="#1e140e"/>
<ellipse cx="10" cy="42" rx="5" ry="3" fill="#8a5a30"/>
<path d="M46,22 L58,22 L62,44 L48,44 Z" fill="#4a3a2e"/>
<ellipse cx="66" cy="5" rx="6" ry="4" fill="#6a5040"/>
<rect x="66" y="24" width="8" height="22" fill="#3a2a20"/>
</g>
<g fill="#c08050" opacity="0.6"><rect x="20" y="30" width="2" height="1"/><rect x="14" y="34" width="3" height="1"/><rect x="52" y="30" width="2" height="2"/><rect x="30" y="44" width="2" height="1"/></g>
</g>
<g transform="translate(19.20,525.82)" clip-path="url(#tc)"><rect width="74" height="46.5" fill="#f4f4f4"/>
<rect x="0" y="32" width="18" height="14.5" fill="#e8e8e8" filter="url(#b2)"/>
<rect x="58" y="38" width="16" height="8.5" fill="#e6e6e6" filter="url(#b2)"/>
<path d="M36,3 C29,3 25.6,8 25.6,15 L25.2,22 C25.4,24 26,25 26.6,25 C27,30 28.5,34 29.5,37 L28,38.5 C24,41 19,43 15.5,46.5 L58.5,46.5 C55,43 50,41 44.5,38.5 L43,37 C44,34 45.5,30 45.8,25 C46.4,25 47,24 47.2,22 L46.6,15 C46.6,8 43,3 36,3 Z" fill="#0e0e10" filter="url(#b05)"/>
<ellipse cx="36" cy="19" rx="4" ry="6" fill="#2a2e34" filter="url(#b2)" opacity="0.8"/>
</g>
<g transform="translate(125.10,525.82)" clip-path="url(#tc)"><rect width="74" height="46.5" fill="#000"/><rect x="0.000" y="0" width="10.621" height="30.4" fill="#ffffff"/><rect x="10.571" y="0" width="10.621" height="30.4" fill="#ffff00"/><rect x="21.143" y="0" width="10.621" height="30.4" fill="#00ffff"/><rect x="31.714" y="0" width="10.621" height="30.4" fill="#00ff00"/><rect x="42.286" y="0" width="10.621" height="30.4" fill="#ff00ff"/><rect x="52.857" y="0" width="10.621" height="30.4" fill="#ff0000"/><rect x="63.429" y="0" width="10.621" height="30.4" fill="#0000ff"/><rect x="0.000" y="30.4" width="10.621" height="4.4" fill="#0000f0"/><rect x="10.571" y="30.4" width="10.621" height="4.4" fill="#000"/><rect x="21.143" y="30.4" width="10.621" height="4.4" fill="#f000f0"/><rect x="31.714" y="30.4" width="10.621" height="4.4" fill="#000"/><rect x="42.286" y="30.4" width="10.621" height="4.4" fill="#00f0f0"/><rect x="52.857" y="30.4" width="10.621" height="4.4" fill="#000"/><rect x="63.429" y="30.4" width="10.621" height="4.4" fill="#ffffff"/><rect x="0.00" y="34.8" width="11.75" height="11.700000000000001" fill="#0a3c8c"/><rect x="11.70" y="34.8" width="12.55" height="11.700000000000001" fill="#ffffff"/><rect x="24.20" y="34.8" width="12.75" height="11.700000000000001" fill="#6a1cd2"/><rect x="36.90" y="34.8" width="18.35" height="11.700000000000001" fill="#000000"/><rect x="51.20" y="34.8" width="4" height="11.700000000000001" fill="#0c0c0c"/><rect x="55.20" y="34.8" width="18.799999999999997" height="11.700000000000001" fill="url(#noise)"/></g>
<g transform="translate(231.00,525.82)" clip-path="url(#tc)"><rect width="74" height="46.5" fill="#000"/><rect x="0.000" y="0" width="10.621" height="30.4" fill="#ffffff"/><rect x="10.571" y="0" width="10.621" height="30.4" fill="#ffff00"/><rect x="21.143" y="0" width="10.621" height="30.4" fill="#00ffff"/><rect x="31.714" y="0" width="10.621" height="30.4" fill="#00ff00"/><rect x="42.286" y="0" width="10.621" height="30.4" fill="#ff00ff"/><rect x="52.857" y="0" width="10.621" height="30.4" fill="#ff0000"/><rect x="63.429" y="0" width="10.621" height="30.4" fill="#0000ff"/><rect x="0.000" y="30.4" width="10.621" height="4.4" fill="#0000f0"/><rect x="10.571" y="30.4" width="10.621" height="4.4" fill="#000"/><rect x="21.143" y="30.4" width="10.621" height="4.4" fill="#f000f0"/><rect x="31.714" y="30.4" width="10.621" height="4.4" fill="#000"/><rect x="42.286" y="30.4" width="10.621" height="4.4" fill="#00f0f0"/><rect x="52.857" y="30.4" width="10.621" height="4.4" fill="#000"/><rect x="63.429" y="30.4" width="10.621" height="4.4" fill="#ffffff"/><rect x="0.00" y="34.8" width="11.75" height="11.700000000000001" fill="#0a3c8c"/><rect x="11.70" y="34.8" width="12.55" height="11.700000000000001" fill="#ffffff"/><rect x="24.20" y="34.8" width="12.75" height="11.700000000000001" fill="#6a1cd2"/><rect x="36.90" y="34.8" width="18.35" height="11.700000000000001" fill="#000000"/><rect x="51.20" y="34.8" width="4" height="11.700000000000001" fill="#0c0c0c"/><rect x="55.20" y="34.8" width="18.799999999999997" height="11.700000000000001" fill="url(#noise)"/></g>
<g transform="translate(442.80,525.82)" clip-path="url(#tc)"><rect width="74" height="46.5" fill="#000"/><rect x="0.000" y="0" width="10.621" height="30.4" fill="#ffffff"/><rect x="10.571" y="0" width="10.621" height="30.4" fill="#ffff00"/><rect x="21.143" y="0" width="10.621" height="30.4" fill="#00ffff"/><rect x="31.714" y="0" width="10.621" height="30.4" fill="#00ff00"/><rect x="42.286" y="0" width="10.621" height="30.4" fill="#ff00ff"/><rect x="52.857" y="0" width="10.621" height="30.4" fill="#ff0000"/><rect x="63.429" y="0" width="10.621" height="30.4" fill="#0000ff"/><rect x="0.000" y="30.4" width="10.621" height="4.4" fill="#0000f0"/><rect x="10.571" y="30.4" width="10.621" height="4.4" fill="#000"/><rect x="21.143" y="30.4" width="10.621" height="4.4" fill="#f000f0"/><rect x="31.714" y="30.4" width="10.621" height="4.4" fill="#000"/><rect x="42.286" y="30.4" width="10.621" height="4.4" fill="#00f0f0"/><rect x="52.857" y="30.4" width="10.621" height="4.4" fill="#000"/><rect x="63.429" y="30.4" width="10.621" height="4.4" fill="#ffffff"/><rect x="0.00" y="34.8" width="11.75" height="11.700000000000001" fill="#0a3c8c"/><rect x="11.70" y="34.8" width="12.55" height="11.700000000000001" fill="#ffffff"/><rect x="24.20" y="34.8" width="12.75" height="11.700000000000001" fill="#6a1cd2"/><rect x="36.90" y="34.8" width="18.35" height="11.700000000000001" fill="#000000"/><rect x="51.20" y="34.8" width="4" height="11.700000000000001" fill="#0c0c0c"/><rect x="55.20" y="34.8" width="18.799999999999997" height="11.700000000000001" fill="url(#noise)"/></g>
<g transform="translate(548.70,525.82)" clip-path="url(#tc)"><rect width="74" height="46.5" fill="#000"/><rect x="0.000" y="0" width="10.621" height="30.4" fill="#ffffff"/><rect x="10.571" y="0" width="10.621" height="30.4" fill="#ffff00"/><rect x="21.143" y="0" width="10.621" height="30.4" fill="#00ffff"/><rect x="31.714" y="0" width="10.621" height="30.4" fill="#00ff00"/><rect x="42.286" y="0" width="10.621" height="30.4" fill="#ff00ff"/><rect x="52.857" y="0" width="10.621" height="30.4" fill="#ff0000"/><rect x="63.429" y="0" width="10.621" height="30.4" fill="#0000ff"/><rect x="0.000" y="30.4" width="10.621" height="4.4" fill="#0000f0"/><rect x="10.571" y="30.4" width="10.621" height="4.4" fill="#000"/><rect x="21.143" y="30.4" width="10.621" height="4.4" fill="#f000f0"/><rect x="31.714" y="30.4" width="10.621" height="4.4" fill="#000"/><rect x="42.286" y="30.4" width="10.621" height="4.4" fill="#00f0f0"/><rect x="52.857" y="30.4" width="10.621" height="4.4" fill="#000"/><rect x="63.429" y="30.4" width="10.621" height="4.4" fill="#ffffff"/><rect x="0.00" y="34.8" width="11.75" height="11.700000000000001" fill="#0a3c8c"/><rect x="11.70" y="34.8" width="12.55" height="11.700000000000001" fill="#ffffff"/><rect x="24.20" y="34.8" width="12.75" height="11.700000000000001" fill="#6a1cd2"/><rect x="36.90" y="34.8" width="18.35" height="11.700000000000001" fill="#000000"/><rect x="51.20" y="34.8" width="4" height="11.700000000000001" fill="#0c0c0c"/><rect x="55.20" y="34.8" width="18.799999999999997" height="11.700000000000001" fill="url(#noise)"/></g>
<g transform="translate(654.60,525.82)" clip-path="url(#tc)"><rect width="74" height="46.5" fill="#000"/><rect x="0.000" y="0" width="10.621" height="30.4" fill="#ffffff"/><rect x="10.571" y="0" width="10.621" height="30.4" fill="#ffff00"/><rect x="21.143" y="0" width="10.621" height="30.4" fill="#00ffff"/><rect x="31.714" y="0" width="10.621" height="30.4" fill="#00ff00"/><rect x="42.286" y="0" width="10.621" height="30.4" fill="#ff00ff"/><rect x="52.857" y="0" width="10.621" height="30.4" fill="#ff0000"/><rect x="63.429" y="0" width="10.621" height="30.4" fill="#0000ff"/><rect x="0.000" y="30.4" width="10.621" height="4.4" fill="#0000f0"/><rect x="10.571" y="30.4" width="10.621" height="4.4" fill="#000"/><rect x="21.143" y="30.4" width="10.621" height="4.4" fill="#f000f0"/><rect x="31.714" y="30.4" width="10.621" height="4.4" fill="#000"/><rect x="42.286" y="30.4" width="10.621" height="4.4" fill="#00f0f0"/><rect x="52.857" y="30.4" width="10.621" height="4.4" fill="#000"/><rect x="63.429" y="30.4" width="10.621" height="4.4" fill="#ffffff"/><rect x="0.00" y="34.8" width="11.75" height="11.700000000000001" fill="#0a3c8c"/><rect x="11.70" y="34.8" width="12.55" height="11.700000000000001" fill="#ffffff"/><rect x="24.20" y="34.8" width="12.75" height="11.700000000000001" fill="#6a1cd2"/><rect x="36.90" y="34.8" width="18.35" height="11.700000000000001" fill="#000000"/><rect x="51.20" y="34.8" width="4" height="11.700000000000001" fill="#0c0c0c"/><rect x="55.20" y="34.8" width="18.799999999999997" height="11.700000000000001" fill="url(#noise)"/></g>
<path d="M363.4,347.6 L363.4,359.8 L366.6,357.4 L368.9,362.3 L370.9,361.3 L368.7,356.6 L372.4,356.4 Z" fill="#3c4044" stroke="#d8d8d8" stroke-width="0.9" stroke-linejoin="round"/>

</svg>
<div class="l" style="left:19.2px;top:153.5px;transform:scaleX(1.047)">16stairstep.ts</div>
<div class="l" style="left:124.8px;top:153.5px;transform:scaleX(1.010)">1920x1080-afc0...</div>
<div class="l" style="left:231.2px;top:153.5px;transform:scaleX(1.021)">4k.mkv</div>
<div class="l" style="left:337.2px;top:153.5px;transform:scaleX(0.967)">ac3_gap.ts</div>
<div class="l" style="left:443.1px;top:153.5px;transform:scaleX(0.947)">Amazing_Caves_...</div>
<div class="l" style="left:548.9px;top:153.5px;transform:scaleX(1.034)">ball.mkv</div>
<div class="l" style="left:654.2px;top:153.5px;transform:scaleX(1.037)">bardata_demo.ts</div>
<div class="l" style="left:18.7px;top:265.0px;transform:scaleX(1.021)">Big Buck Bunny, ...</div>
<div class="l" style="left:124.8px;top:265.0px;transform:scaleX(1.027)">big-buck-bunny_...</div>
<div class="l" style="left:230.7px;top:265.0px;transform:scaleX(1.050)">blue.mkv</div>
<div class="l" style="left:337.2px;top:265.0px;transform:scaleX(1.001)">cablevision-ch83...</div>
<div class="l" style="left:442.7px;top:265.0px;transform:scaleX(0.918)">Clip AXIS VR 01_...</div>
<div class="l" style="left:548.9px;top:265.0px;transform:scaleX(1.010)">cnni_test1.ts</div>
<div class="l" style="left:654.2px;top:265.0px;transform:scaleX(1.005)">eagle_injected....</div>
<div class="l" style="left:19.9px;top:376.5px;transform:scaleX(1.058)">first.mkv</div>
<div class="l" style="left:125.7px;top:376.5px;transform:scaleX(1.083)">first.ts</div>
<div class="l" style="left:230.9px;top:376.5px;transform:scaleX(1.050)">free.mkv</div>
<div class="l" style="left:336.8px;top:376.5px;transform:scaleX(1.051)">good.mp4</div>
<div class="l" style="left:442.4px;top:376.5px;transform:scaleX(1.056)">green.mkv</div>
<div class="l" style="left:548.9px;top:376.5px;transform:scaleX(1.010)">h264_interlaced...</div>
<div class="l" style="left:654.2px;top:376.5px;transform:scaleX(1.043)">interlaced.ts</div>
<div class="l" style="left:18.9px;top:488.0px;transform:scaleX(0.970)">KGO-HD.mkv</div>
<div class="l" style="left:124.7px;top:488.0px;transform:scaleX(0.986)">KGO-HD.ts</div>
<div class="l" style="left:229.9px;top:488.0px;transform:scaleX(1.146)">lol.mkv</div>
<div class="l" style="left:336.8px;top:488.0px;transform:scaleX(1.061)">lol.ts</div>
<div class="l" style="left:442.4px;top:488.0px;transform:scaleX(1.061)">lol2.mp4</div>
<div class="l" style="left:548.9px;top:488.0px;transform:scaleX(1.045)">lolilol.mkv</div>
<div class="l" style="left:654.2px;top:488.0px;transform:scaleX(0.993)">medusa_h264_b...</div></body></html>
